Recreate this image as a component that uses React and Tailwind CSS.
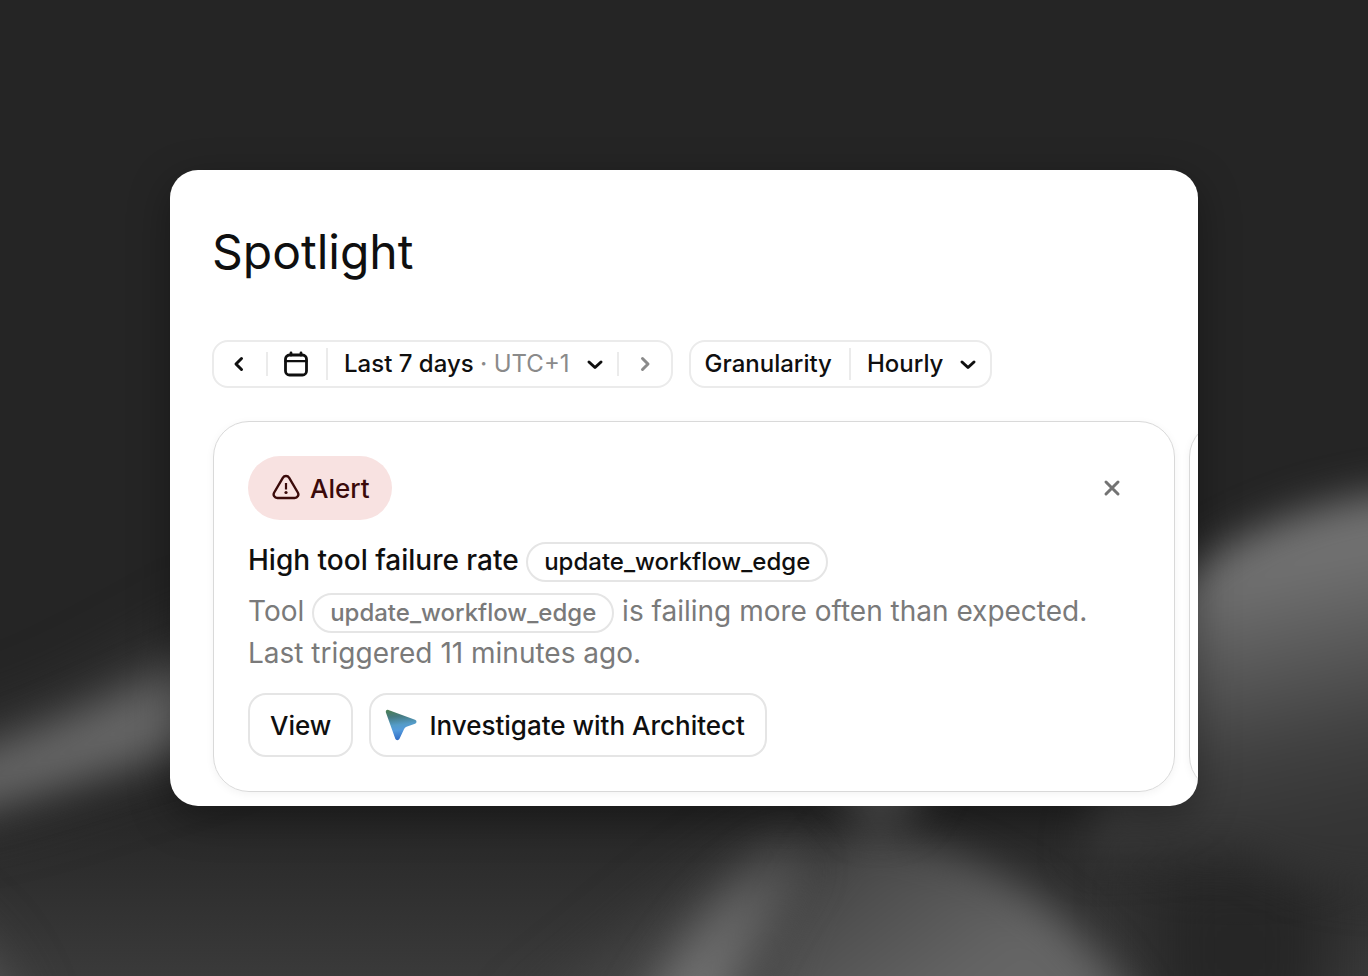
import React from "react";

const Chevron = ({ d, className = "" }) => (
  <svg viewBox="0 0 24 24" className={"size-6 shrink-0 " + className} fill="none" stroke="currentColor" strokeWidth="3" strokeLinecap="round" strokeLinejoin="round" aria-hidden="true">
    <path d={d} />
  </svg>
);

const LEFT = "M14.5 6.5 9 12l5.5 5.5";
const RIGHT = "M9.5 6.5 15 12l-5.5 5.5";
const DOWN = "M6 10l6 5.5 6-5.5";

function CalendarIcon() {
  return (
    <svg viewBox="0 0 28 28" className="size-7" fill="none" stroke="currentColor" strokeWidth="2.8" strokeLinecap="round" strokeLinejoin="round" aria-hidden="true">
      <rect x="3.5" y="5" width="21" height="20" rx="4" />
      <path d="M3.5 11.2h21" strokeWidth="2.2" />
      <path d="M9 3V5M19 3V5" />
    </svg>
  );
}

function AlertIcon() {
  return (
    <svg viewBox="0 0 28 28" className="size-7" fill="none" stroke="currentColor" strokeWidth="2.4" strokeLinecap="round" strokeLinejoin="round" aria-hidden="true">
      <path d="M10.800 3.800c1.500-2.500 4.900-2.500 6.400 0l8.600 14.700c1.500 2.500-.3 5.500-3.200 5.500H5.400c-2.900 0-4.700-3-3.200-5.500z" />
      <path d="M14 9v6.500" strokeLinecap="butt" strokeWidth="2.2" />
      <circle cx="14" cy="18.500" r="1.600" fill="currentColor" stroke="none" />
    </svg>
  );
}

function ArchitectIcon() {
  return (
    <svg viewBox="0 0 32 32" className="size-8" aria-hidden="true">
      <defs>
        <linearGradient id="architect" x1="0.3" y1="0" x2="0.42" y2="1">
          <stop offset="0" stopColor="#4c8058" />
          <stop offset="0.22" stopColor="#457a80" />
          <stop offset="0.5" stopColor="#549cc8" />
          <stop offset="0.68" stopColor="#549bdc" />
          <stop offset="1" stopColor="#2f6ac4" />
        </linearGradient>
      </defs>
      <path fill="url(#architect)" d="M3.400.9 30 10.700c2 .8 2 3.200 0 4l-8.500 3c-1.200.5-2 1.200-2.500 2.500l-4.500 9.500c-.8 1.900-3.500 1.900-4.200 0L.9 3.400C.4 1.700 1.700.3 3.400.9z" />
    </svg>
  );
}

function Wallpaper() {
  return (
    <svg className="absolute inset-0 size-full" viewBox="0 0 1368 976" preserveAspectRatio="none" aria-hidden="true">
      <defs>
        <filter id="soft" x="-50%" y="-50%" width="200%" height="200%" colorInterpolationFilters="sRGB"><feGaussianBlur stdDeviation="20" /></filter>
        <filter id="wide" x="-50%" y="-50%" width="200%" height="200%" colorInterpolationFilters="sRGB"><feGaussianBlur stdDeviation="32" /></filter>
        <linearGradient id="floor" x1="0" y1="0" x2="0" y2="1">
          <stop offset="0" stopColor="#252525" />
          <stop offset="1" stopColor="#3a3a3a" />
        </linearGradient>
        <linearGradient id="right" gradientUnits="userSpaceOnUse" x1="1260" y1="490" x2="1330" y2="830">
          <stop offset="0" stopColor="#747474" />
          <stop offset="0.25" stopColor="#707070" />
          <stop offset="0.5" stopColor="#585858" />
          <stop offset="0.75" stopColor="#404040" />
          <stop offset="1" stopColor="#343434" />
        </linearGradient>
        <linearGradient id="hill" gradientUnits="userSpaceOnUse" x1="860" y1="830" x2="970" y2="980">
          <stop offset="0" stopColor="#444444" />
          <stop offset="1" stopColor="#656565" />
        </linearGradient>
        <linearGradient id="ridge" gradientUnits="userSpaceOnUse" x1="810" y1="840" x2="680" y2="976">
          <stop offset="0" stopColor="#505050" stopOpacity="0.3" />
          <stop offset="0.5" stopColor="#626262" />
          <stop offset="1" stopColor="#707070" />
        </linearGradient>
      </defs>
      <rect width="1368" height="976" fill="#252525" />
      <rect y="800" width="1368" height="176" fill="url(#floor)" />
      <rect x="1150" y="860" width="180" height="180" fill="#262626" filter="url(#wide)" />
      <path d="M1080 860 1140 620C1190 555 1290 490 1480 485V880C1400 900 1300 890 1240 850z" fill="url(#right)" filter="url(#soft)" />
      <path d="M-80 745C20 730 110 680 230 610V740C110 775 40 805-80 825z" fill="#3c3c3c" filter="url(#wide)" />
      <path d="M-80 775C20 745 110 700 230 650V735C110 765 40 795-80 820z" fill="#666666" filter="url(#soft)" />
      <path d="M-100 900C-40 930 0 970 20 1060H-100z" fill="#606060" filter="url(#wide)" />
      <path d="M520 1040C640 950 720 860 820 830L870 1040z" fill="#484848" filter="url(#wide)" />
      <path d="M760 1060C770 960 800 870 860 830 980 850 1080 900 1165 1060z" fill="url(#hill)" filter="url(#soft)" />
      <path d="M625 1040C680 940 730 880 790 845L810 870C770 910 745 960 715 1040z" fill="url(#ridge)" filter="url(#soft)" />
      <path d="M800 740H950L905 815 870 825z" fill="#626262" filter="url(#soft)" />
    </svg>
  );
}

const Chip = ({ children }) => (
  <code className="-my-1 inline-flex h-10 items-center rounded-full border-2 border-[#e5e5e5] px-4 align-middle font-['Inter',sans-serif] text-2xl font-medium">
    {children}
  </code>
);

const Divider = ({ tall }) => <span className={tall ? "h-8 w-0.5 bg-[#ebebeb]" : "h-6 w-0.5 bg-[#ebebeb]"} />;

export default function App() {
  return (
    <main className="relative isolate min-h-screen overflow-hidden bg-[#252525] p-[170px] font-['Inter',sans-serif] text-[#0f0f0f]">
      <Wallpaper />
      <section className="relative overflow-hidden rounded-[28px] bg-white pb-3.5 pl-[42px] pt-[54px] shadow-[0_12px_40px_rgba(0,0,0,0.35)]">
        <h1 className="text-5xl leading-14">Spotlight</h1>

        <div className="mt-15 flex flex-wrap gap-4 text-2xl font-medium">
          <div className="flex h-12 items-center rounded-2xl border-2 border-[#ebebeb]">
            <button type="button" aria-label="Previous period" className="flex w-[52px] justify-center pr-0.5"><Chevron d={LEFT} /></button>
            <Divider />
            <button type="button" aria-label="Pick dates" className="flex w-[58px] justify-center pr-0.5"><CalendarIcon /></button>
            <Divider tall />
            <button type="button" aria-haspopup="listbox" className="flex items-center gap-[13px] whitespace-nowrap pl-4 pr-2.5">
              <span>Last 7 days <span className="text-[#8a8a8a]">· <span className="font-normal">UTC+1</span></span></span>
              <Chevron d={DOWN} />
            </button>
            <Divider />
            <button type="button" aria-label="Next period" className="flex w-[52px] justify-center text-[#8a8a8a]"><Chevron d={RIGHT} /></button>
          </div>

          <div className="flex h-12 items-center rounded-2xl border-2 border-[#ebebeb] pl-3.5">
            <label htmlFor="granularity" className="pr-[17px]">Granularity</label>
            <Divider tall />
            <div className="grid items-center">
              <select id="granularity" defaultValue="Hourly" className="col-start-1 row-start-1 appearance-none bg-transparent pl-4 pr-[46px]">
                <option>Hourly</option>
                <option>Daily</option>
              </select>
              <Chevron d={DOWN} className="pointer-events-none col-start-1 row-start-1 mr-2.5 justify-self-end" />
            </div>
          </div>
        </div>

        <div className="ml-px mt-[33px] flex gap-3.5">
          <article className="w-[calc(100%-23px)] shrink-0 rounded-[36px] border border-[#d9d9d9] p-[34px] pr-11 shadow-[0_2px_8px_rgba(0,0,0,0.05)]">
            <div className="flex items-center justify-between">
              <span className="flex h-16 items-center gap-2.5 rounded-full bg-[#f8e2e1] pl-6 pr-[22px] text-[26px] font-medium text-[#3b0a0a]">
                <AlertIcon />
                Alert
              </span>
              <button type="button" aria-label="Dismiss alert" className="p-1.5 text-[#737373]">
                <svg viewBox="0 0 24 24" className="size-6" fill="none" stroke="currentColor" strokeWidth="3" strokeLinecap="round" aria-hidden="true"><path d="m6 6 12 12M18 6 6 18" /></svg>
              </button>
            </div>
            <h2 className="mt-[19px] text-[28px] font-medium leading-[42px]">
              High tool failure rate <Chip>update_workflow_edge</Chip>
            </h2>
            <p className="mt-[9px] text-[28px] leading-[42px] text-[#7a7a7a]">
              Tool <Chip>update_workflow_edge</Chip> is failing more often than expected. Last triggered 11 minutes ago.
            </p>
            <div className="mt-[19px] flex flex-wrap gap-4 text-[26px] font-medium">
              <button type="button" className="h-16 rounded-[18px] border-2 border-[#e5e5e5] px-5">View</button>
              <button type="button" className="flex h-16 items-center gap-3 rounded-[18px] border-2 border-[#e5e5e5] pl-3.5 pr-5">
                <ArchitectIcon />
                Investigate with Architect
              </button>
            </div>
          </article>
          <article aria-label="Next alert" className="w-[calc(100%-23px)] shrink-0 rounded-[36px] border border-[#d9d9d9] shadow-[0_2px_8px_rgba(0,0,0,0.05)]" />
        </div>
      </section>
    </main>
  );
}
